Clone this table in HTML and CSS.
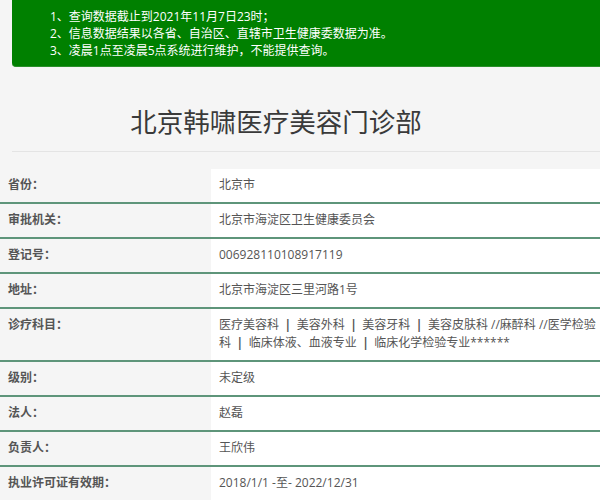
FILE: index.html
```html
<!DOCTYPE html>
<html lang="zh-CN">
<head>
<meta charset="utf-8">
<title>北京韩啸医疗美容门诊部</title>
<link rel="stylesheet" href="styles.css">
</head>
<body>
<div class="page">
  <div class="notice">
    <p>1、查询数据截止到2021年11月7日23时；</p>
    <p>2、信息数据结果以各省、自治区、直辖市卫生健康委数据为准。</p>
    <p>3、凌晨1点至凌晨5点系统进行维护，不能提供查询。</p>
  </div>
  <h1 class="title">北京韩啸医疗美容门诊部</h1>
  <div class="info">
    <div class="row"><div class="label">省份：</div><div class="value">北京市</div></div>
    <div class="row"><div class="label">审批机关：</div><div class="value">北京市海淀区卫生健康委员会</div></div>
    <div class="row"><div class="label">登记号：</div><div class="value">006928110108917119</div></div>
    <div class="row"><div class="label">地址：</div><div class="value">北京市海淀区三里河路1号</div></div>
    <div class="row"><div class="label">诊疗科目：</div><div class="value nowrap">医疗美容科<span class="sep">|</span>美容外科<span class="sep">|</span>美容牙科<span class="sep">|</span>美容皮肤科 //麻醉科 //医学检验<br>科<span class="sep">|</span>临床体液、血液专业<span class="sep">|</span>临床化学检验专业******</div></div>
    <div class="row"><div class="label">级别：</div><div class="value">未定级</div></div>
    <div class="row"><div class="label">法人：</div><div class="value">赵磊</div></div>
    <div class="row"><div class="label">负责人：</div><div class="value">王欣伟</div></div>
    <div class="row"><div class="label">执业许可证有效期：</div><div class="value">2018/1/1 -至- 2022/12/31</div></div>
  </div>
</div>
</body>
</html>
```

FILE: styles.css
```css
html, body {
  margin: 0;
  padding: 0;
  background: #f5f5f5;
  overflow: hidden;
}
body {
  font-family: "Open Sans", "Noto Sans CJK SC", sans-serif;
  font-size: 12px;
  color: #555;
}
.page {
  width: 620px;
}
.notice {
  margin: 0 0 0 12px;
  background: #008000;
  color: #fff;
  padding: 8px 0 8px 38px;
  border-radius: 0 0 4px 4px;
  border-bottom: 1px solid #2a8f2a;
  height: 50px;
}
.notice p {
  margin: 0;
  line-height: 17px;
  white-space: nowrap;
}
.title {
  margin: 34px 0 17px 12px;
  padding: 0 80px 10px 0;
  width: 528px;
  font-weight: normal;
  font-size: 26.5px;
  line-height: 40px;
  color: #3a3a3a;
  text-align: center;
  border-bottom: 1px solid #e4e4e4;
  font-family: "Noto Sans CJK SC", sans-serif;
}
.info {
  display: flex;
  flex-direction: column;
}
.row {
  display: grid;
  grid-template-columns: 211px 1fr;
  border-bottom: 2px solid #5e957a;
}
.label {
  padding: 7px 8px 8px;
  line-height: 18px;
  font-weight: bold;
  color: #555;
  background: #f5f5f5;
}
.value {
  padding: 7px 8px 8px;
  line-height: 18px;
  background: #fff;
}
.nowrap {
  white-space: nowrap;
}
.sep {
  font-weight: bold;
  padding: 0 5.5px;
}
```
